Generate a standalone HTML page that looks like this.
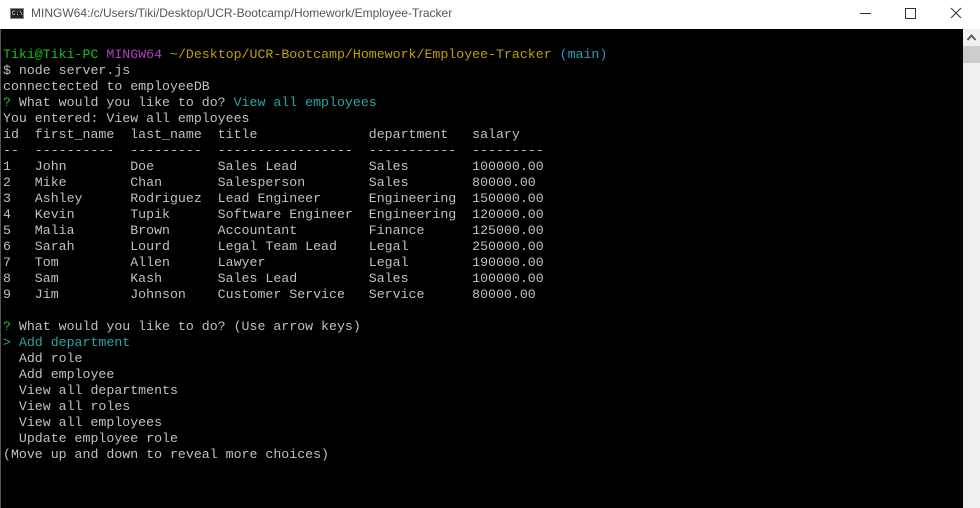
<!DOCTYPE html>
<html><head><meta charset="utf-8"><style>
body{margin:0;width:980px;height:508px;overflow:hidden;background:#000;position:relative;font-family:"Liberation Sans",sans-serif}
.tb{position:absolute;left:0;top:0;width:980px;height:29px;background:#fff}
.tt{position:absolute;left:31px;top:6px;font-size:12px;color:#555}
.ic{position:absolute;left:10px;top:8px;width:14px;height:11px;background:#222;border:1px solid #888;box-sizing:border-box}
.ic:after{content:"C:\\";position:absolute;left:1px;top:1px;font-size:6px;color:#fff;font-family:"Liberation Mono",monospace}
.term{position:absolute;left:3px;top:47px;margin:0;font-family:"Liberation Mono",monospace;font-size:13.25px;line-height:16px;color:#c0c0c0;white-space:pre}
.g{color:#1cc01c}.m{color:#b040c0}.y{color:#c0a000}.c{color:#2a9fbf}.t{color:#2aa5a5}
.sb{position:absolute;left:963px;top:29px;width:17px;height:479px;background:#f0f0f0}
.th{position:absolute;left:963px;top:46px;width:17px;height:17px;background:#cdcdcd}
.lb{position:absolute;left:0;top:29px;width:1px;height:479px;background:#555}
</style></head><body>
<div class="tb"><div class="ic"></div><div class="tt">MINGW64:/c/Users/Tiki/Desktop/UCR-Bootcamp/Homework/Employee-Tracker</div>
<svg style="position:absolute;left:820px;top:0" width="160" height="29"><line x1="40" y1="13.5" x2="51" y2="13.5" stroke="#333" stroke-width="1"/><rect x="85.5" y="8.5" width="10" height="10" fill="none" stroke="#333"/><path d="M131 8 L141 18 M141 8 L131 18" stroke="#333" stroke-width="1"/></svg></div>
<div class="lb"></div>
<div class="sb"><svg width="17" height="17"><path d="M4.5 11 L8.5 6.5 L12.5 11" stroke="#606060" stroke-width="2" fill="none"/></svg></div><div class="th"></div>
<pre class="term"><span class="g">Tiki@Tiki-PC</span> <span class="m">MINGW64</span> <span class="y">~/Desktop/UCR-Bootcamp/Homework/Employee-Tracker</span> <span class="c">(main)</span>
$ node server.js
connectected to employeeDB
<span class="g">?</span> What would you like to do? <span class="t">View all employees</span>
You entered: View all employees
id  first_name  last_name  title              department   salary
--  ----------  ---------  -----------------  -----------  ---------
1   John        Doe        Sales Lead         Sales        100000.00
2   Mike        Chan       Salesperson        Sales        80000.00
3   Ashley      Rodriguez  Lead Engineer      Engineering  150000.00
4   Kevin       Tupik      Software Engineer  Engineering  120000.00
5   Malia       Brown      Accountant         Finance      125000.00
6   Sarah       Lourd      Legal Team Lead    Legal        250000.00
7   Tom         Allen      Lawyer             Legal        190000.00
8   Sam         Kash       Sales Lead         Sales        100000.00
9   Jim         Johnson    Customer Service   Service      80000.00

<span class="g">?</span> What would you like to do? (Use arrow keys)
<span class="t">&gt; Add department</span>
  Add role
  Add employee
  View all departments
  View all roles
  View all employees
  Update employee role
(Move up and down to reveal more choices)</pre>
</body></html>
